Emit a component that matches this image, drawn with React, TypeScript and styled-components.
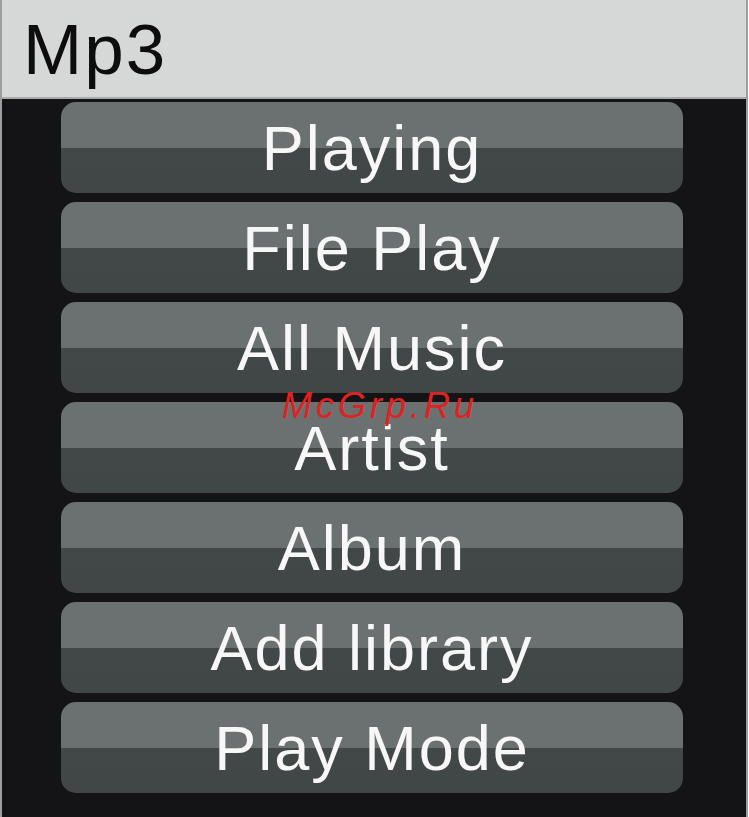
import styled, { createGlobalStyle } from 'styled-components';

const GlobalStyle = createGlobalStyle`
  html, body {
    margin: 0;
    padding: 0;
    background: #ffffff;
  }
  body {
    font-family: 'Liberation Sans', Arial, sans-serif;
  }
`;

const Screen = styled.div`
  position: relative;
  width: 744px;
  height: 817px;
  margin-right: 1px;
  border-left: 2px solid #9c9e9d;
  border-right: 2px solid #9c9e9d;
  background: #141416;
  display: flex;
  flex-direction: column;
  overflow: hidden;
`;

const Header = styled.div`
  height: 97px;
  background: #d6d8d7;
  border-bottom: 2px solid #a9abaa;
  display: flex;
  align-items: center;
  padding-left: 21px;
  font-size: 71px;
  letter-spacing: 2px;
  color: #0d0d0d;
  line-height: 1;
`;

const Title = styled.span`
  margin-top: 2px;
`;

const Menu = styled.div`
  display: flex;
  flex-direction: column;
  gap: 9px;
  padding: 3px 0 0 59px;
`;

const MenuButton = styled.div`
  width: 622px;
  height: 91px;
  border-radius: 15px;
  background: linear-gradient(
    to bottom,
    #6b7170 0,
    #6b7170 46px,
    #424747 46px,
    #414646 100%
  );
  display: flex;
  align-items: center;
  justify-content: center;
  color: #f7f7f7;
  font-size: 63px;
  letter-spacing: 2px;
  line-height: 1;
`;

const Label = styled.span`
  margin-top: 2px;
`;

const Watermark = styled.div`
  position: absolute;
  top: 388px;
  left: 280px;
  color: #e02222;
  font-size: 36px;
  font-style: italic;
  letter-spacing: 4px;
  line-height: 1;
`;

const items = [
  'Playing',
  'File Play',
  'All Music',
  'Artist',
  'Album',
  'Add library',
  'Play Mode',
];

export default function App() {
  return (
    <>
      <GlobalStyle />
      <Screen>
        <Header>
          <Title>Mp3</Title>
        </Header>
        <Menu>
          {items.map((item) => (
            <MenuButton key={item}>
              <Label>{item}</Label>
            </MenuButton>
          ))}
        </Menu>
        <Watermark>McGrp.Ru</Watermark>
      </Screen>
    </>
  );
}
